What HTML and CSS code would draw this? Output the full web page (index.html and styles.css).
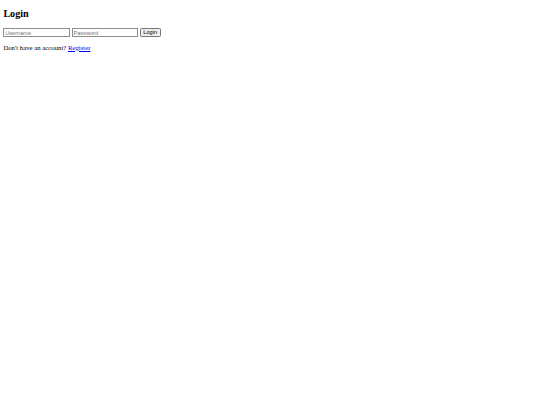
FILE: index.html
```html
<!DOCTYPE html>
<html lang="en">
<head>
<meta charset="utf-8">
<title>Login</title>
<link rel="stylesheet" href="styles.css">
</head>
<body class="page">
  <h2 class="title">Login</h2>
  <form class="login-form">
    <input class="field" type="text" placeholder="Username">
    <input class="field" type="password" placeholder="Password">
    <button class="submit" type="submit">Login</button>
  </form>
  <p class="note">Don't have an account? <a class="link" href="#">Register</a></p>
</body>
</html>
```
FILE: styles.css
```css
html {
  background: #fff;
}

.page {
  margin: 3.375px;
  font-family: "Liberation Serif", "Times New Roman", serif;
  font-size: 6.75px;
  color: #000;
}

.title {
  font-size: 10.125px;
  font-weight: bold;
  margin: 5px 0 8.4px;
}

.login-form {
  display: flex;
  align-items: center;
  gap: 1.7px;
  margin: 0;
  padding: 0.3px 0;
}

.field {
  box-sizing: border-box;
  width: 66.5px;
  height: 9.3px;
  padding: 0.4px 0.85px;
  border: 0.85px solid #8d8d8d;
  border-radius: 0;
  font-family: "Liberation Sans", Arial, sans-serif;
  font-size: 5.625px;
  color: #000;
  background: #fff;
  outline: none;
}

.field::placeholder {
  color: #757575;
}

.submit {
  box-sizing: border-box;
  height: 9.3px;
  padding: 0 2.6px;
  border: 0.85px solid #767676;
  border-radius: 1.3px;
  background: #efefef;
  font-family: "Liberation Sans", Arial, sans-serif;
  font-size: 5.625px;
  color: #000;
  line-height: 1;
}

.note {
  margin: 6.2px 0;
}

.link {
  color: #0000ee;
  text-decoration: underline;
}
```
